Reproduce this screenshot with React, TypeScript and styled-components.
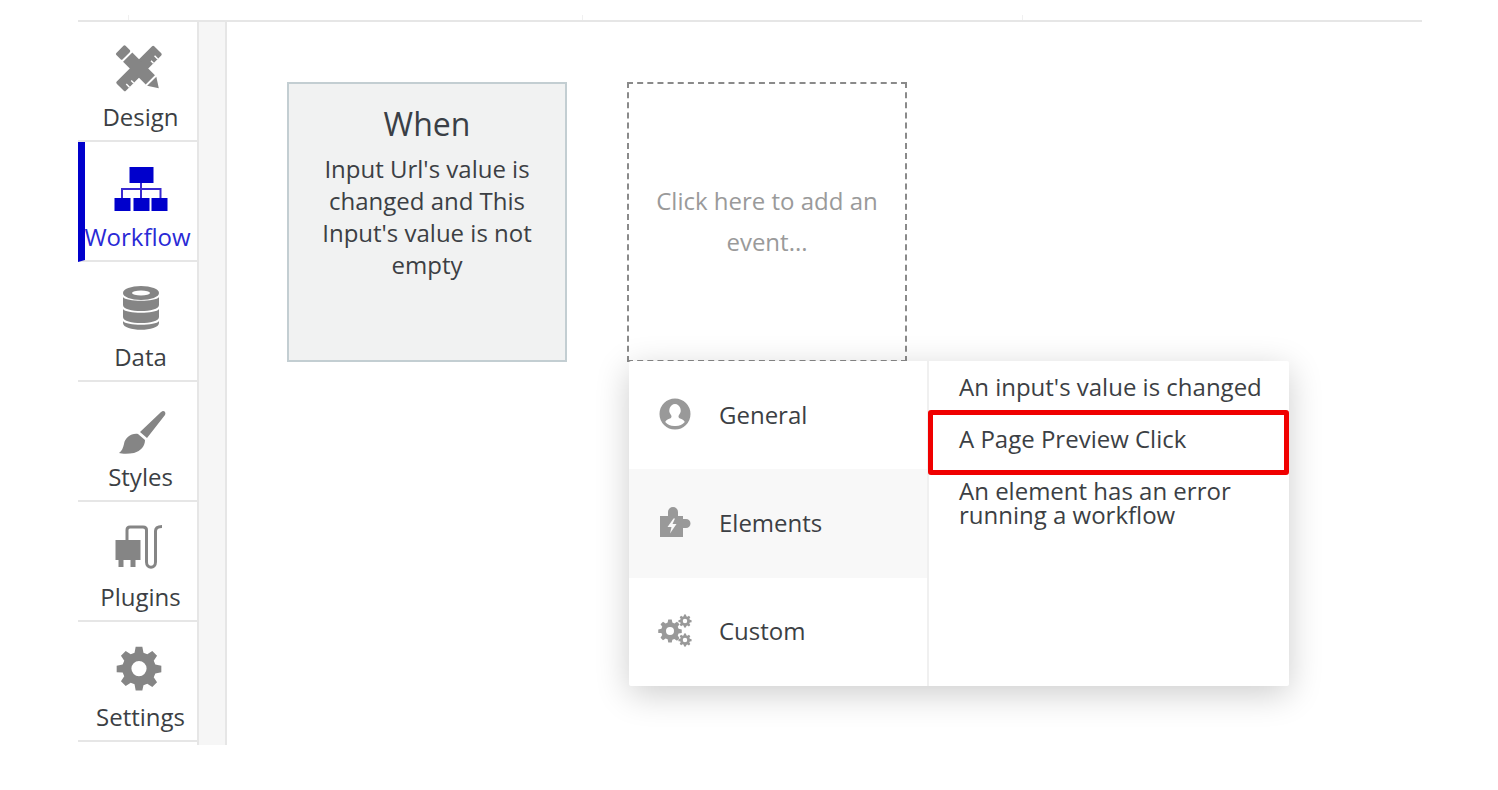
import React from "react";
import styled, { createGlobalStyle } from "styled-components";

const Global = createGlobalStyle`
  html, body { margin: 0; padding: 0; background: #fff; }
  body { font-family: "Open Sans", "Noto Sans", sans-serif; color: #3c3f44; overflow: hidden; }
`;

const Frame = styled.div`
  width: 1344px;
  height: 790px;
  margin-left: 78px;
  display: flex;
  flex-direction: column;
`;

const TopRule = styled.div`
  height: 22px;
  flex: none;
  box-sizing: border-box;
  border-bottom: 2px solid #e6e6e6;
  display: flex;
  align-items: flex-end;
`;

const Tick = styled.span<{ $w: number }>`
  width: ${(p) => p.$w}px;
  height: 5px;
  flex: none;
  box-sizing: border-box;
  border-right: 1px solid #f0f0f0;
`;

const Body = styled.div`
  height: 723px;
  display: flex;
`;

const Sidebar = styled.nav`
  width: 121px;
  flex: none;
  box-sizing: border-box;
  border-right: 2px solid #e6e6e6;
`;

const NavItem = styled.div<{ $active?: boolean }>`
  height: 120px;
  box-sizing: border-box;
  border-bottom: 2px solid #e6e6e6;
  border-left: ${(p) => (p.$active ? "7px solid #0000cc" : "0")};
  display: flex;
  flex-direction: column;
  align-items: center;
  justify-content: flex-end;
  padding: 0 ${(p) => (p.$active ? "7px" : "0")} 8px ${(p) => (p.$active ? "0" : "6px")};
  color: ${(p) => (p.$active ? "#2a2ad6" : "#3c3f44")};
  font-size: 24px;
  line-height: 30px;
`;

const NavIcon = styled.svg<{ $color?: string }>`
  width: 60px;
  height: 50px;
  margin-bottom: 9px;
  margin-left: -6px;
  fill: ${(p) => p.$color || "#858585"};
  display: block;
  overflow: visible;
`;

const Rail = styled.div`
  width: 28px;
  flex: none;
  box-sizing: border-box;
  background: #f6f6f6;
  border-right: 2px solid #e6e6e6;
`;

const Canvas = styled.main`
  flex: 1;
  position: relative;
  display: flex;
  align-items: flex-start;
  gap: 60px;
  padding: 60px 0 0 60px;
`;

const WhenCard = styled.div`
  width: 280px;
  height: 280px;
  box-sizing: border-box;
  background: #f1f2f2;
  border: 2px solid #c3ced2;
  text-align: center;
  padding: 18px 20px 0;
`;

const WhenTitle = styled.div`
  font-size: 32px;
  line-height: 44px;
  color: #3a3f46;
  margin-bottom: 7px;
`;

const WhenText = styled.div`
  font-size: 24px;
  line-height: 32px;
`;

const AddCard = styled.div`
  width: 280px;
  height: 280px;
  box-sizing: border-box;
  border: 2px dashed #8a8a8a;
  color: #9a9a9a;
  font-size: 24px;
  line-height: 41px;
  text-align: center;
  padding: 96px 20px 0;
`;

const Popup = styled.div`
  position: absolute;
  left: 402px;
  top: 339px;
  width: 660px;
  height: 325px;
  display: flex;
  background: #fff;
  border-radius: 2px;
  box-shadow: 0 8px 34px rgba(0, 0, 0, 0.2);
`;

const Categories = styled.div`
  width: 300px;
  flex: none;
  box-sizing: border-box;
  border-right: 2px solid #f0f0f0;
  display: flex;
  flex-direction: column;
`;

const Category = styled.div<{ $active?: boolean }>`
  flex: 1;
  display: flex;
  align-items: center;
  background: ${(p) => (p.$active ? "#f8f8f8" : "transparent")};
  font-size: 24px;
  padding-left: 28px;
  padding-bottom: 2px;
`;

const CatIcon = styled.svg`
  width: 36px;
  height: 36px;
  margin-right: 26px;
  fill: #999;
  flex: none;
  overflow: visible;
`;

const Events = styled.div`
  position: relative;
  flex: 1;
  display: flex;
  flex-direction: column;
  gap: 28px;
  padding: 14px 10px 0 30px;
  font-size: 24px;
  line-height: 24px;
  white-space: nowrap;
`;

const EventItem = styled.div`
  white-space: pre-line;
`;

const Highlight = styled.div`
  position: absolute;
  left: -1px;
  top: 49px;
  width: 361px;
  height: 65px;
  box-sizing: border-box;
  border: 5px solid #f00000;
  border-radius: 3px;
`;

const GEAR = "M26.500 5h7l1.200 6.200 4 1.700 5.300-3.500 5 5-3.500 5.300 1.700 4 6.300 1.200v7l-6.300 1.200-1.700 4 3.500 5.300-5 5-5.300-3.500-4 1.700L33.500 51h-7l-1.200-6.400-4-1.700-5.300 3.500-5-5 3.500-5.300-1.700-4L6.500 31.900v-7l6.300-1.200 1.700-4-3.500-5.300 5-5 5.300 3.500 4-1.700zM30 20a8 8 0 1 0 0 16 8 8 0 0 0 0-16z";

export default function App() {
  return (
    <>
      <Global />
      <Frame>
        <TopRule>
          <Tick $w={51} />
          <Tick $w={454} />
          <Tick $w={440} />
        </TopRule>
        <Body>
          <Sidebar>
            <NavItem>
              <NavIcon viewBox="0 0 60 50">
                <g transform="translate(31 25.500)">
                  <g transform="rotate(-45)">
                    <rect x="-26.500" y="-6.500" width="53" height="13" rx="1.500" />
                    <path d="M-20 6.500V2M-14 6.500V3M14 6.500V3M20 6.500V2" stroke="#fff" strokeWidth="1.500" />
                  </g>
                  <g transform="rotate(45)">
                    <rect x="-27" y="-6.500" width="9" height="13" rx="1.500" />
                    <rect x="-16" y="-6.500" width="32" height="13" />
                    <path d="M18-6.500L28 0 18 6.500z" />
                  </g>
                </g>
              </NavIcon>
              Design
            </NavItem>
            <NavItem $active>
              <NavIcon viewBox="0 0 60 50" $color="#0000cc">
                <rect x="24.500" y="4" width="24" height="16" />
                <rect x="9.500" y="35" width="16" height="13" />
                <rect x="28.500" y="35" width="16" height="13" />
                <rect x="46.500" y="35" width="16" height="13" />
                <path d="M36 20v15M17 35v-9h38.500v9" fill="none" stroke="#3a2ad0" strokeWidth="2" />
              </NavIcon>
              Workflow
            </NavItem>
            <NavItem>
              <NavIcon viewBox="0 0 60 50">
                <ellipse cx="33" cy="10" rx="18" ry="7" />
                <ellipse cx="33" cy="10" rx="9" ry="2.600" fill="#fff" />
                <path d="M15 14c3 5 33 5 36 0v8c0 8-36 8-36 0zM15 26c3 5 33 5 36 0v8c0 8-36 8-36 0zM15 38c3 5 33 5 36 0v2c0 9-36 9-36 0z" />
              </NavIcon>
              Data
            </NavItem>
            <NavItem>
              <NavIcon viewBox="0 0 60 50">
                <g transform="translate(0 5)">
                  <path d="M55 3c2 0 3 2 2 4L39 30l-7-6L52 5c1-1 2-2 3-2z" />
                  <path d="M30 26l7 6c0 6-4 11-11 13-5 1-12 1-15 0 3-2 4-5 5-9 1-6 7-11 14-10z" />
                </g>
              </NavIcon>
              Styles
            </NavItem>
            <NavItem>
              <NavIcon viewBox="0 0 60 50">
                <rect x="7.500" y="17" width="25" height="20" />
                <rect x="10.500" y="37" width="5" height="7" />
                <rect x="22.500" y="37" width="5" height="7" />
                <path d="M19 17V7Q19 4 22 4H35Q38.500 4 38.500 7V39C38.500 46 47.500 46 47.500 39V8C47.500 5 50 3.500 54 3.500" fill="none" stroke="#858585" strokeWidth="3" />
              </NavIcon>
              Plugins
            </NavItem>
            <NavItem>
              <NavIcon viewBox="0 0 60 50">
                <path transform="translate(2.500 -1) scale(.95)" fillRule="evenodd" d={GEAR} />
              </NavIcon>
              Settings
            </NavItem>
          </Sidebar>
          <Rail />
          <Canvas>
            <WhenCard>
              <WhenTitle>When</WhenTitle>
              <WhenText>Input Url's value is changed and This Input's value is not empty</WhenText>
            </WhenCard>
            <AddCard>Click here to add an event...</AddCard>
            <Popup>
              <Categories>
                <Category>
                  <CatIcon viewBox="0 0 36 36">
                    <path fillRule="evenodd" d="M18 2.500a15.500 15.500 0 1 0 0 31 15.500 15.500 0 0 0 0-31zM18 8a6 6.500 0 0 1 4 11c-1 1-.5 3 1 3.500 2 .8 4 1.500 4.800 3.500A12 12 0 0 1 18 30a12 12 0 0 1-9.800-4c.8-2 2.800-2.700 4.800-3.500 1.500-.5 2-2.500 1-3.500A6 6.500 0 0 1 18 8z" />
                  </CatIcon>
                  General
                </Category>
                <Category $active>
                  <CatIcon viewBox="0 0 36 36">
                    <path fillRule="evenodd" d="M3 12H11V8a5 5 0 0 1 10 0V12H26V15h3a4.500 4.500 0 0 1 0 9h-3V33H3zM16.500 14.500L10.500 23h4l-1.500 6.500L19.500 20h-4l2.500-5.500z" />
                  </CatIcon>
                  Elements
                </Category>
                <Category>
                  <CatIcon viewBox="0 0 36 36">
                    <path transform="translate(-2 4) scale(.5)" fillRule="evenodd" d={GEAR} />
                    <path transform="translate(19.600 .2) scale(.28)" fillRule="evenodd" d={GEAR} />
                    <path transform="translate(19.600 19.200) scale(.28)" fillRule="evenodd" d={GEAR} />
                  </CatIcon>
                  Custom
                </Category>
              </Categories>
              <Events>
                <EventItem>An input's value is changed</EventItem>
                <EventItem>A Page Preview Click</EventItem>
                <EventItem>{"An element has an error\nrunning a workflow"}</EventItem>
                <Highlight />
              </Events>
            </Popup>
          </Canvas>
        </Body>
      </Frame>
    </>
  );
}
